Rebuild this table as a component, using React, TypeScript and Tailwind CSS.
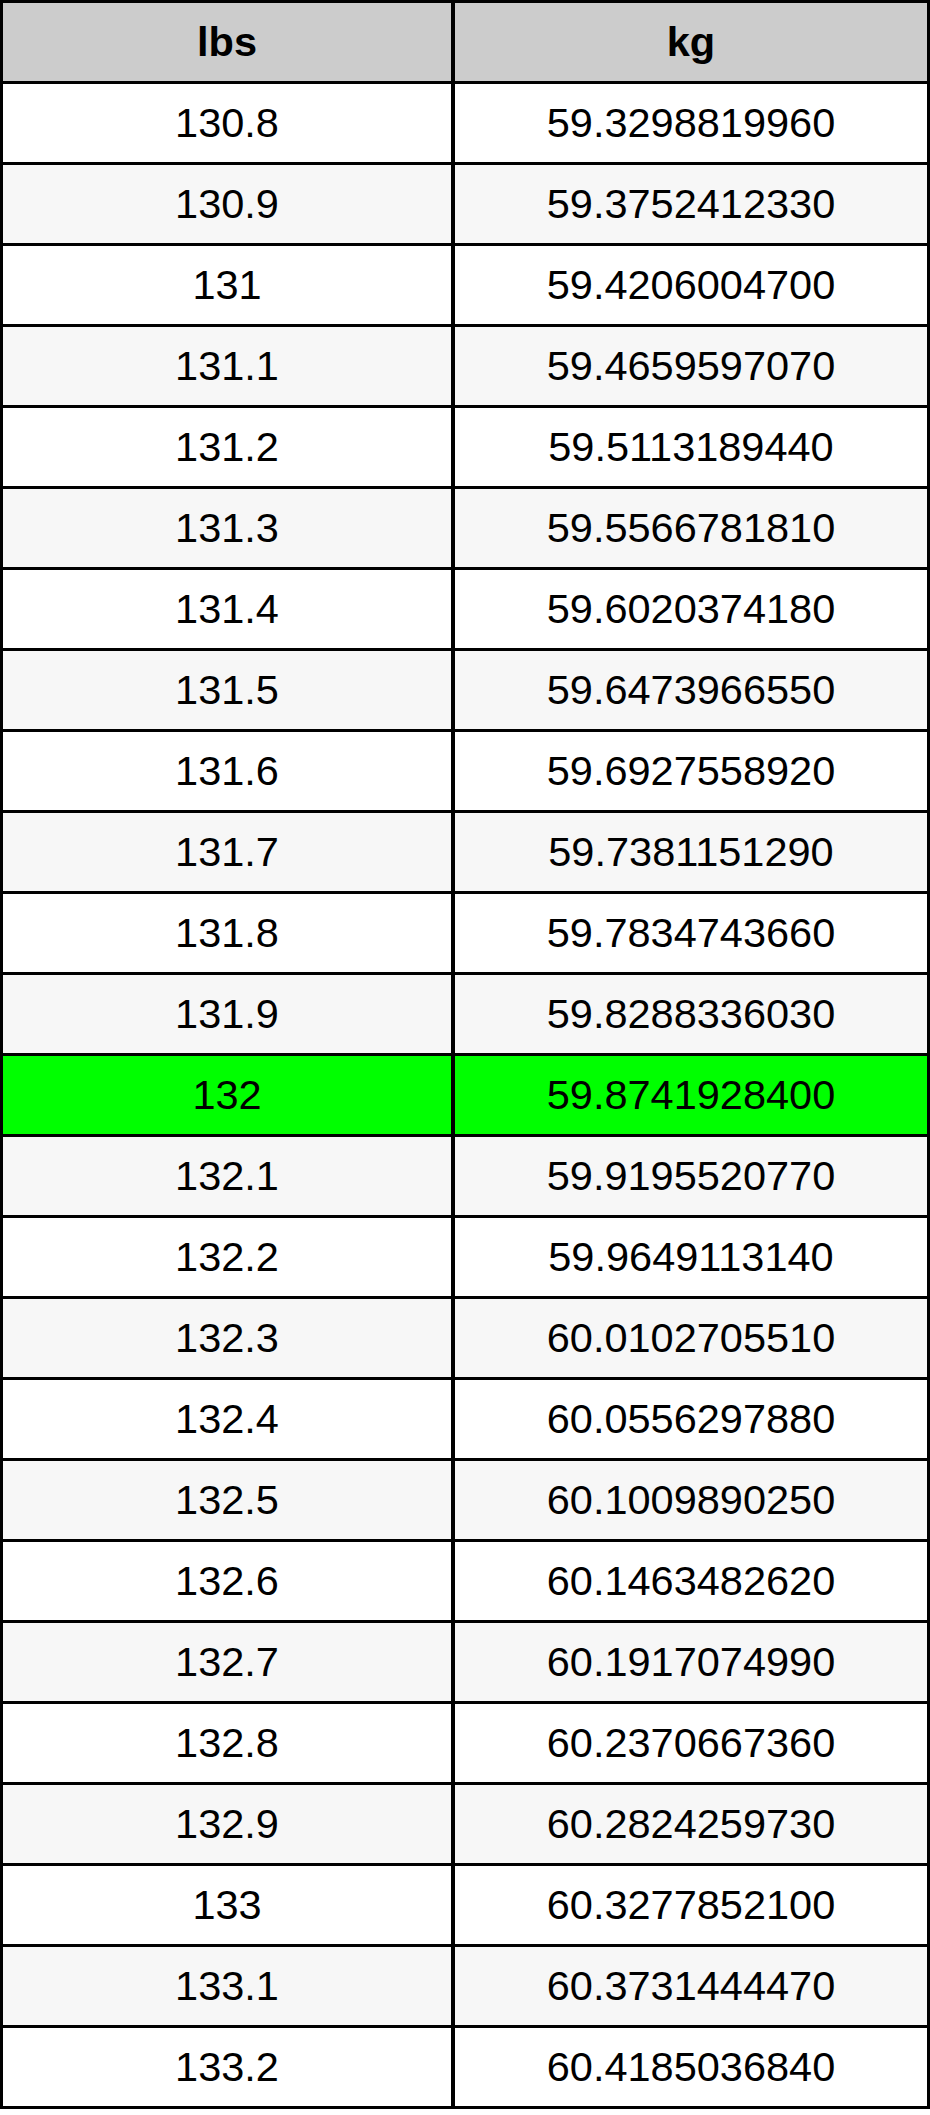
import React from 'react';

const ROWS: [string, string][] = [
  ['130.8', '59.3298819960'],
  ['130.9', '59.3752412330'],
  ['131', '59.4206004700'],
  ['131.1', '59.4659597070'],
  ['131.2', '59.5113189440'],
  ['131.3', '59.5566781810'],
  ['131.4', '59.6020374180'],
  ['131.5', '59.6473966550'],
  ['131.6', '59.6927558920'],
  ['131.7', '59.7381151290'],
  ['131.8', '59.7834743660'],
  ['131.9', '59.8288336030'],
  ['132', '59.8741928400'],
  ['132.1', '59.9195520770'],
  ['132.2', '59.9649113140'],
  ['132.3', '60.0102705510'],
  ['132.4', '60.0556297880'],
  ['132.5', '60.1009890250'],
  ['132.6', '60.1463482620'],
  ['132.7', '60.1917074990'],
  ['132.8', '60.2370667360'],
  ['132.9', '60.2824259730'],
  ['133', '60.3277852100'],
  ['133.1', '60.3731444470'],
  ['133.2', '60.4185036840'],
];

const App: React.FC = () => {
  return (
    <div className="w-[930px] bg-white" style={{ fontFamily: '"Liberation Sans", Arial, sans-serif' }}>
      <div className="grid grid-cols-[448px_1fr] auto-rows-[78px] gap-x-[4px] gap-y-[3px] bg-black p-[3px] text-black text-[41.5px] leading-none">
        <div className="bg-[#cccccc] flex items-center justify-center font-bold">lbs</div>
        <div className="bg-[#cccccc] flex items-center justify-center font-bold">kg</div>
        {ROWS.map(([lbs, kg], i) => {
          const bg = lbs === '132' ? 'bg-[#00ff00]' : i % 2 === 0 ? 'bg-white' : 'bg-[#f7f7f7]';
          return (
            <React.Fragment key={lbs}>
              <div className={`${bg} flex items-center justify-center`}>{lbs}</div>
              <div className={`${bg} flex items-center justify-center`}>{kg}</div>
            </React.Fragment>
          );
        })}
      </div>
    </div>
  );
};

export default App;
